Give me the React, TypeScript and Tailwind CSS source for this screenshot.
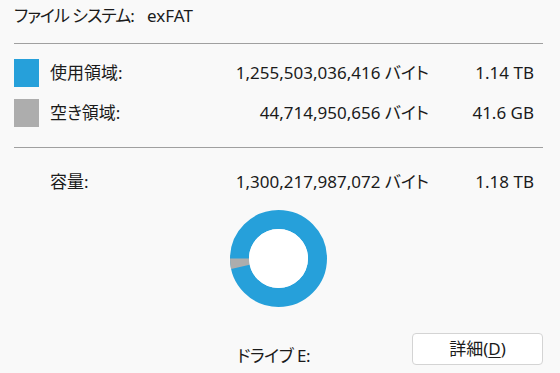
import React from "react";

const font = "font-['Noto_Sans','Noto_Sans_CJK_JP',sans-serif] [font-feature-settings:'palt']";

function Donut() {
  const c = 48.5;
  const r = 39;
  const a1 = (167.6 * Math.PI) / 180;
  const x0 = c - r;
  const y0 = c;
  const x1 = c + r * Math.cos(a1);
  const y1 = c + r * Math.sin(a1);
  return (
    <svg width="97" height="97" viewBox="0 0 97 97">
      <circle cx={c} cy={c} r={r} fill="none" stroke="#26a0da" strokeWidth="19" />
      <path
        d={`M ${x0} ${y0} A ${r} ${r} 0 0 0 ${x1} ${y1}`}
        fill="none"
        stroke="#adadad"
        strokeWidth="19"
      />
      <circle cx={c} cy={c} r="29.5" fill="#ffffff" />
    </svg>
  );
}

function Row({
  color,
  label,
  bytes,
  size,
}: {
  color?: string;
  label: string;
  bytes: string;
  size: string;
}) {
  return (
    <div className="flex items-center h-[28px]">
      {color ? (
        <div className={`w-[25px] h-[28px] shrink-0 ${color}`} />
      ) : (
        <div className="w-[25px] h-[28px] shrink-0" />
      )}
      <div className="ml-[11px] w-[180px] shrink-0 whitespace-nowrap">{label}</div>
      <div className="w-[199px] shrink-0 text-right whitespace-nowrap">{bytes}</div>
      <div className="w-[105px] shrink-0 text-right whitespace-nowrap">{size}</div>
    </div>
  );
}

export default function App() {
  return (
    <div
      className={`w-[560px] h-[373px] overflow-hidden bg-[#f9f9f9] text-[#1b1b1b] text-[17px] leading-[24px] ${font}`}
    >
      <div className="pl-[14px] pr-[17px]">
        <div className="h-[32px] flex items-center">
          <span className="w-[133px] shrink-0 whitespace-nowrap tracking-[-1px]">ファイル システム:</span>
          <span>exFAT</span>
        </div>
        <div className="mt-[11px] h-px bg-[#a0a0a0]" />
        <div className="mt-[15px]">
          <Row color="bg-[#26a0da]" label="使用領域:" bytes="1,255,503,036,416 バイト" size="1.14 TB" />
        </div>
        <div className="mt-[12px]">
          <Row color="bg-[#adadad]" label="空き領域:" bytes="44,714,950,656 バイト" size="41.6 GB" />
        </div>
        <div className="mt-[20px] h-px bg-[#a0a0a0]" />
        <div className="mt-[20px]">
          <Row label="容量:" bytes="1,300,217,987,072 バイト" size="1.18 TB" />
        </div>
        <div className="mt-[14px] flex justify-center">
          <Donut />
        </div>
        <div className="mt-[26px] flex items-start h-[32px]">
          <div className="ml-[223px] mt-[11px] whitespace-nowrap tracking-[-0.5px]">ドライブ E:</div>
          <button className="ml-auto w-[131px] h-[32px] rounded-[4px] border border-[#d4d4d4] bg-white text-[17px] leading-[24px] text-[#1b1b1b] flex items-center justify-center">
            詳細(<span className="underline underline-offset-2">D</span>)
          </button>
        </div>
      </div>
    </div>
  );
}
